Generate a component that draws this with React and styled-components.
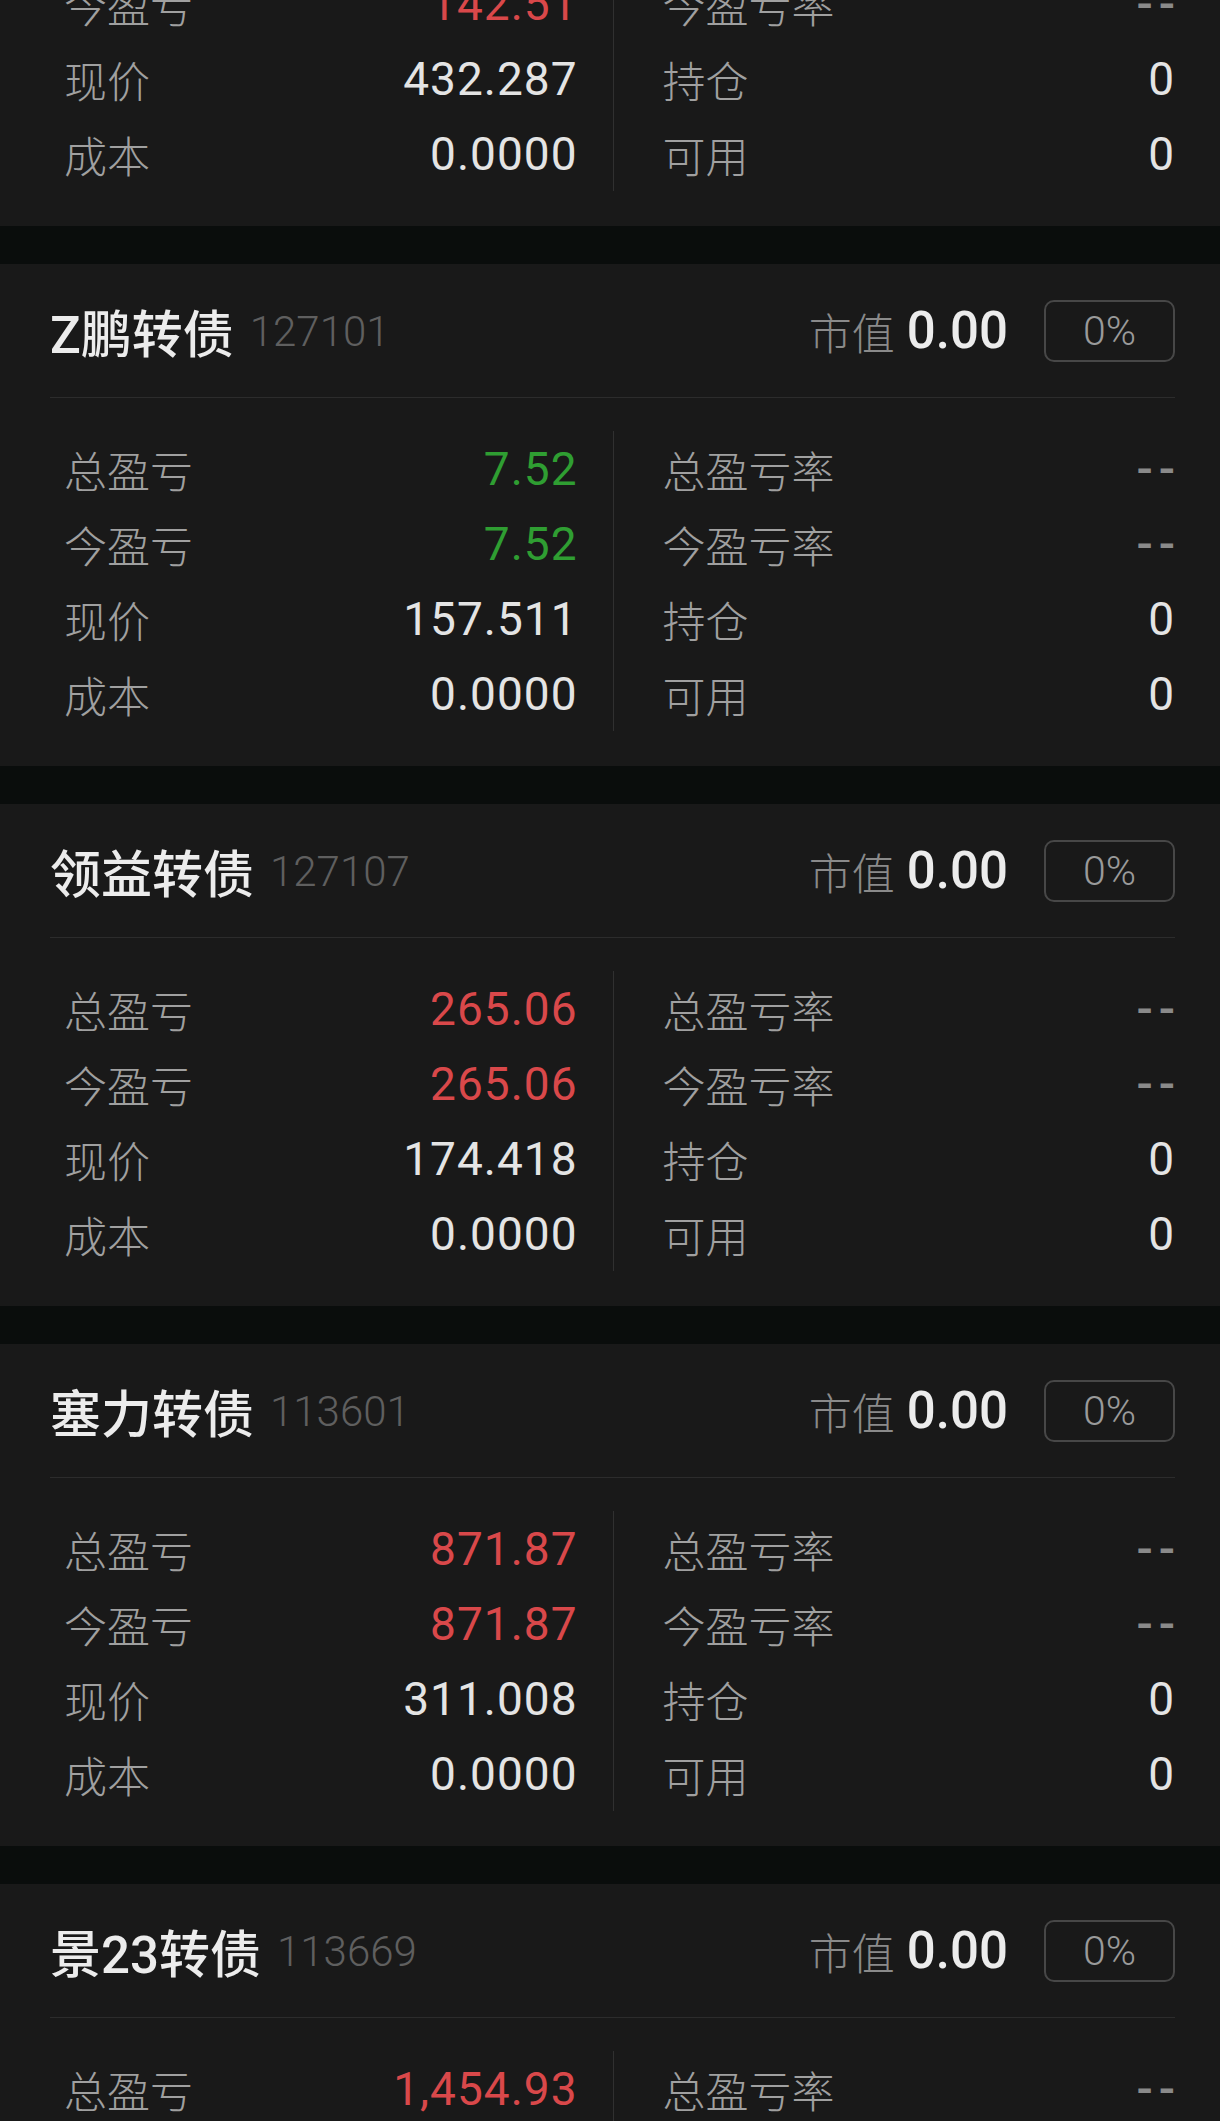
import React from "react"
import styled, { createGlobalStyle } from "styled-components"

const GlobalStyle = createGlobalStyle`
  html, body {
    margin: 0;
    padding: 0;
    background: #0a0d0c;
  }
  * {
    box-sizing: border-box;
  }
`

const cjk = `Roboto, "Noto Sans CJK SC", sans-serif`

const holdings = [
  {
    name: "天23转债",
    code: "113682",
    total: "142.51",
    today: "142.51",
    trend: "up",
    price: "432.287",
  },
  {
    name: "Z鹏转债",
    code: "127101",
    total: "7.52",
    today: "7.52",
    trend: "down",
    price: "157.511",
  },
  {
    name: "领益转债",
    code: "127107",
    total: "265.06",
    today: "265.06",
    trend: "up",
    price: "174.418",
  },
  {
    name: "塞力转债",
    code: "113601",
    total: "871.87",
    today: "871.87",
    trend: "up",
    price: "311.008",
  },
  {
    name: "景23转债",
    code: "113669",
    total: "1,454.93",
    today: "1,454.93",
    trend: "up",
    price: "266.120",
  },
]

const trendColor = {
  up: "#d9484a",
  down: "#2f9e32",
  flat: "#e4e4e4",
}

const App = () => {
  return (
    <Screen>
      <GlobalStyle />
      <List>
        {holdings.map((item) => (
          <Card key={item.code}>
            <Header>
              <Name>{item.name}</Name>
              <Code>{item.code}</Code>
              <Worth>
                <WorthLabel>市值</WorthLabel>
                <WorthValue>0.00</WorthValue>
              </Worth>
              <Ratio>0%</Ratio>
            </Header>
            <Body>
              <Column>
                <Row>
                  <Label>总盈亏</Label>
                  <Value $color={trendColor[item.trend]}>{item.total}</Value>
                </Row>
                <Row>
                  <Label>今盈亏</Label>
                  <Value $color={trendColor[item.trend]}>{item.today}</Value>
                </Row>
                <Row>
                  <Label>现价</Label>
                  <Value>{item.price}</Value>
                </Row>
                <Row>
                  <Label>成本</Label>
                  <Value>0.0000</Value>
                </Row>
              </Column>
              <Column $right>
                <Row>
                  <Label>总盈亏率</Label>
                  <Dash>--</Dash>
                </Row>
                <Row>
                  <Label>今盈亏率</Label>
                  <Dash>--</Dash>
                </Row>
                <Row>
                  <Label>持仓</Label>
                  <Value>0</Value>
                </Row>
                <Row>
                  <Label>可用</Label>
                  <Value>0</Value>
                </Row>
              </Column>
            </Body>
          </Card>
        ))}
      </List>
    </Screen>
  )
}

export default App

const Screen = styled.div`
  width: 1220px;
  height: 2121px;
  overflow: hidden;
  background: #0a0d0c;
  font-family: ${cjk};
`

const List = styled.div`
  display: flex;
  flex-direction: column;
  gap: 38px;
  margin-top: -276px;
`

const Card = styled.div`
  background: #191919;
  padding: 0 45px 0 50px;
  height: 502px;
  display: flex;
  flex-direction: column;
`

const Header = styled.div`
  height: 134px;
  display: flex;
  align-items: center;
  border-bottom: 1px solid #2c2c2c;
  flex-shrink: 0;
`

const Name = styled.span`
  font-size: 51px;
  font-weight: 500;
  color: #ececec;
`

const Code = styled.span`
  font-family: Roboto, sans-serif;
  font-size: 42px;
  font-weight: 300;
  color: #5f5f5f;
  margin-left: 16px;
  margin-top: 2px;
`

const Worth = styled.div`
  margin-left: auto;
  display: flex;
  align-items: center;
  gap: 12px;
`

const WorthLabel = styled.span`
  font-size: 43px;
  font-weight: 300;
  color: #8a8a8a;
`

const WorthValue = styled.span`
  font-family: Roboto, sans-serif;
  font-size: 51px;
  font-weight: 500;
  color: #ececec;
`

const Ratio = styled.div`
  margin-left: 36px;
  width: 131px;
  height: 62px;
  border: 2px solid #474747;
  border-radius: 10px;
  display: flex;
  align-items: center;
  justify-content: center;
  font-family: Roboto, sans-serif;
  font-size: 41px;
  font-weight: 300;
  color: #9a9a9a;
`

const Body = styled.div`
  display: grid;
  grid-template-columns: 1fr 1fr;
  padding: 33px 0 34px;
`

const Column = styled.div`
  display: flex;
  flex-direction: column;
  padding: ${(p) => (p.$right ? "0 0 0 49px" : "0 35px 0 14px")};
  border-left: ${(p) => (p.$right ? "1px solid #303030" : "none")};
`

const Row = styled.div`
  height: 75px;
  display: flex;
  align-items: center;
  justify-content: space-between;
`

const Label = styled.span`
  font-size: 43px;
  font-weight: 300;
  color: #a0a0a0;
`

const Value = styled.span`
  font-family: Roboto, sans-serif;
  font-size: 46px;
  font-weight: 400;
  letter-spacing: 1px;
  color: ${(p) => p.$color || "#e4e4e4"};
`

const Dash = styled.span`
  font-family: Roboto, sans-serif;
  font-size: 48px;
  font-weight: 500;
  letter-spacing: 6px;
  margin-right: -6px;
  color: #8a8a8a;
`
